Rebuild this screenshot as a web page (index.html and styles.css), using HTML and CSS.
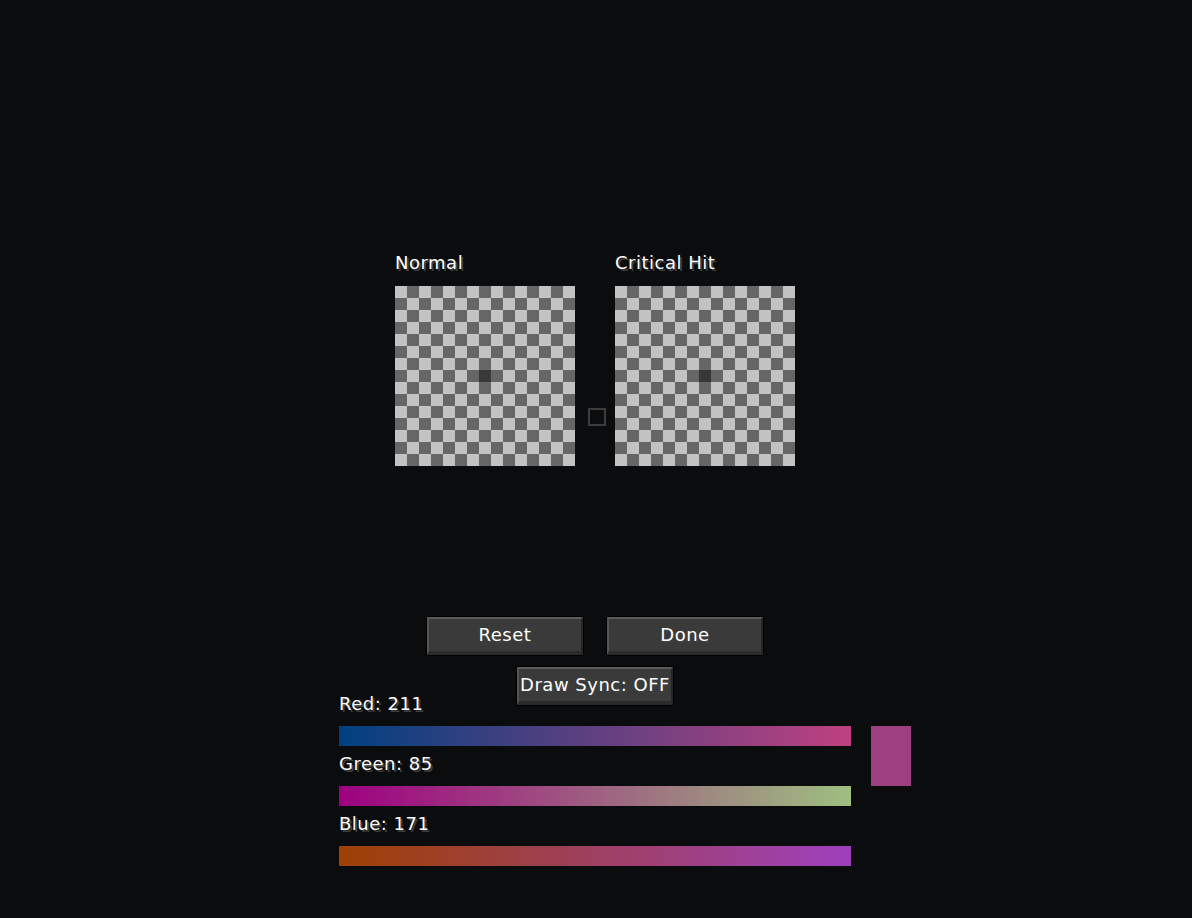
FILE: index.html
```html
<!DOCTYPE html>
<html lang="en">

<head>
    <meta charset="UTF-8">
    <title>Hit Color</title>
    <link rel="stylesheet" href="styles.css">
</head>

<body>
    <div class="screen">
        <div class="previews">
            <div class="preview">
                <span class="label">Normal</span>
                <div class="board"></div>
            </div>
            <div class="link">
                <div class="link-box"></div>
            </div>
            <div class="preview">
                <span class="label">Critical Hit</span>
                <div class="board"></div>
            </div>
        </div>

        <div class="buttons">
            <button class="btn">Reset</button>
            <button class="btn">Done</button>
        </div>
        <div class="buttons sync">
            <button class="btn">Draw Sync: OFF</button>
        </div>

        <div class="picker">
            <div class="sliders">
                <div class="slider">
                    <span class="label">Red: 211</span>
                    <div class="bar red"></div>
                </div>
                <div class="slider">
                    <span class="label">Green: 85</span>
                    <div class="bar green"></div>
                </div>
                <div class="slider">
                    <span class="label">Blue: 171</span>
                    <div class="bar blue"></div>
                </div>
            </div>
            <div class="swatch"></div>
        </div>
    </div>
</body>

</html>
```

FILE: styles.css
```css
html,
body {
    margin: 0;
    background: #0b0c0d;
}

.screen {
    min-height: 918px;
    font-family: "DejaVu Sans", "Liberation Sans", sans-serif;
    font-size: 18px;
    line-height: 18px;
    letter-spacing: 0.5px;
    color: #fff;
}

.label {
    display: block;
    height: 18px;
    white-space: nowrap;
    text-shadow: 2px 2px 0 #3e3e3e;
}

.previews {
    display: flex;
    justify-content: center;
    padding: 254px 2px 0 0;
}

.preview {
    width: 180px;
}

.preview .label {
    margin-bottom: 14px;
}

.board {
    width: 180px;
    height: 180px;
    background:
        linear-gradient(#383838, #383838) 84px 84px / 12px 12px no-repeat,
        conic-gradient(#666 25%, #c2c2c2 0 50%, #666 0 75%, #c2c2c2 0) 0 0 / 24px 24px;
}

.link {
    width: 40px;
    padding-top: 154px;
}

.link-box {
    width: 14px;
    height: 14px;
    margin-left: 13px;
    border: 2px solid #3c3c3c;
}

.buttons {
    display: flex;
    justify-content: center;
    gap: 24px;
    padding-right: 2px;
    margin-top: 151px;
}

.buttons.sync {
    margin-top: 12px;
}

.btn {
    box-sizing: border-box;
    width: 156px;
    height: 38px;
    padding: 0;
    display: flex;
    align-items: center;
    justify-content: center;
    font: inherit;
    letter-spacing: inherit;
    color: #fff;
    text-shadow: 2px 2px 0 #3e3e3e;
    background: #3a3a3a;
    border-style: solid;
    border-width: 2px 2px 4px 2px;
    border-color: #5b5b5b #262626 #2b2b2b #555;
    outline: 1px solid #000;
    white-space: nowrap;
}

.picker {
    display: flex;
    gap: 20px;
    margin: -10px 0 0 339px;
}

.sliders {
    width: 512px;
}

.slider .label {
    margin-bottom: 13px;
}

.bar {
    height: 20px;
    margin-bottom: 9px;
}

.bar.red {
    background: linear-gradient(to right, #004080, #bf4080);
}

.bar.green {
    background: linear-gradient(to right, #9e0080, #9ebf80);
}

.bar.blue {
    background: linear-gradient(to right, #9e4000, #9e40bf);
}

.swatch {
    width: 40px;
    height: 60px;
    margin-top: 31px;
    background: #9e4080;
}
```
